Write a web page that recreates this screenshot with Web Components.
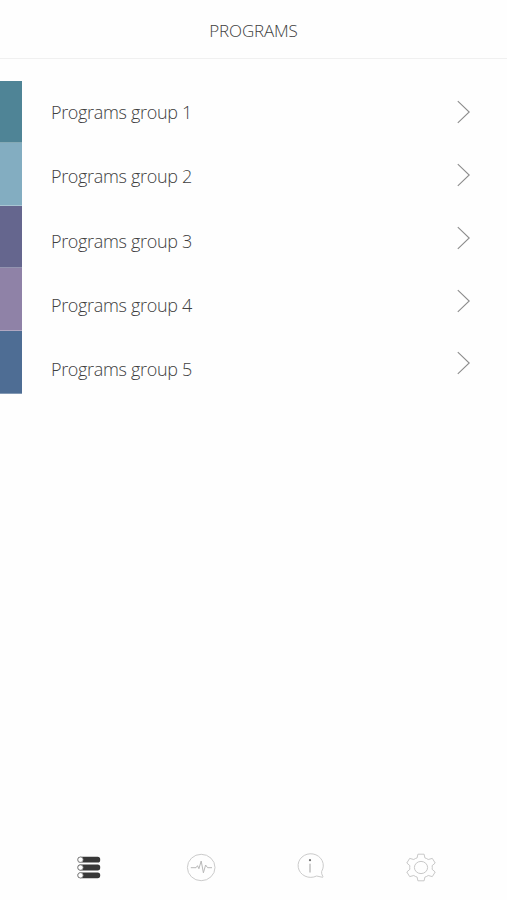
<!DOCTYPE html>
<html lang="en">
<head>
<meta charset="utf-8">
<meta name="viewport" content="width=device-width, initial-scale=1">
<title>Programs</title>
<style>
    body {
        margin: 0;
        background: #fefefe;
        color: #404040;
        font-family: "Open Sans", "Noto Sans", sans-serif;
        font-weight: 300;
    }
</style>
</head>
<body>
<programs-screen>
    <screen-header slot="header">PROGRAMS</screen-header>
    <program-list>
        <program-stripe slot="stripes" color="#4f8496" size="62"></program-stripe>
        <program-stripe slot="stripes" color="#83adc1" size="63"></program-stripe>
        <program-stripe slot="stripes" color="#65668e" size="62"></program-stripe>
        <program-stripe slot="stripes" color="#8f82a7" size="63"></program-stripe>
        <program-stripe slot="stripes" color="#4e6d94" size="63"></program-stripe>
        <program-label>Programs group 1</program-label>
        <program-label>Programs group 2</program-label>
        <program-label>Programs group 3</program-label>
        <program-label>Programs group 4</program-label>
        <program-label>Programs group 5</program-label>
        <chevron-icon slot="arrows"></chevron-icon>
        <chevron-icon slot="arrows"></chevron-icon>
        <chevron-icon slot="arrows"></chevron-icon>
        <chevron-icon slot="arrows"></chevron-icon>
        <chevron-icon slot="arrows"></chevron-icon>
    </program-list>
    <tab-bar slot="footer">
        <tab-icon name="list"></tab-icon>
        <tab-icon name="pulse"></tab-icon>
        <tab-icon name="info"></tab-icon>
        <tab-icon name="gear"></tab-icon>
    </tab-bar>
</programs-screen>

<script>
class ProgramsScreen extends HTMLElement {
    constructor() {
        super();
        this.attachShadow({ mode: "open" });
        this.shadowRoot.innerHTML = `
            <style>
                :host {
                    display: flex;
                    flex-direction: column;
                    height: 100vh;
                    overflow: hidden;
                }
                main {
                    flex: 1;
                    padding-top: 22px;
                }
            </style>
            <slot name="header"></slot>
            <main><slot></slot></main>
            <slot name="footer"></slot>
        `;
    }
}

class ScreenHeader extends HTMLElement {
    constructor() {
        super();
        this.attachShadow({ mode: "open" });
        this.shadowRoot.innerHTML = `
            <style>
                :host {
                    display: block;
                    box-sizing: border-box;
                    height: 59px;
                    padding-top: 19px;
                    border-bottom: 1px solid #f0f0f0;
                    text-align: center;
                    font-size: 17px;
                    line-height: 24px;
                    letter-spacing: -0.15px;
                }
            </style>
            <slot></slot>
        `;
    }
}

class ProgramList extends HTMLElement {
    constructor() {
        super();
        this.attachShadow({ mode: "open" });
        this.shadowRoot.innerHTML = `
            <style>
                :host {
                    display: grid;
                    grid-template-columns: 22px 1fr 14px;
                    padding-right: 36px;
                    align-items: start;
                }
                .column {
                    display: flex;
                    flex-direction: column;
                }
                .labels {
                    padding-left: 29px;
                }
            </style>
            <div class="column"><slot name="stripes"></slot></div>
            <div class="column labels"><slot></slot></div>
            <div class="column"><slot name="arrows"></slot></div>
        `;
    }
}

class ProgramStripe extends HTMLElement {
    constructor() {
        super();
        this.attachShadow({ mode: "open" });
        this.shadowRoot.innerHTML = `
            <style>
                :host {
                    display: block;
                    box-sizing: border-box;
                    width: 22px;
                    height: ${this.getAttribute("size")}px;
                    background: ${this.getAttribute("color")};
                    border-bottom: 1px solid rgba(255, 255, 255, 0.3);
                }
            </style>
        `;
    }
}

class ProgramLabel extends HTMLElement {
    constructor() {
        super();
        this.attachShadow({ mode: "open" });
        this.shadowRoot.innerHTML = `
            <style>
                :host {
                    display: block;
                    height: 64.25px;
                    font-size: 18px;
                    line-height: 63px;
                    letter-spacing: -0.33px;
                    white-space: nowrap;
                }
            </style>
            <slot></slot>
        `;
    }
}

class ChevronIcon extends HTMLElement {
    constructor() {
        super();
        this.attachShadow({ mode: "open" });
        this.shadowRoot.innerHTML = `
            <style>
                :host {
                    display: flex;
                    align-items: center;
                    height: 62.75px;
                }
            </style>
            <svg width="14" height="24" viewBox="0 0 14 24" fill="none" stroke="#8c8c8c" stroke-width="1.1">
                <path d="M.8 1.2 12.2 12 .8 22.8"/>
            </svg>
        `;
    }
}

class TabBar extends HTMLElement {
    constructor() {
        super();
        this.attachShadow({ mode: "open" });
        this.shadowRoot.innerHTML = `
            <style>
                :host {
                    display: grid;
                    grid-template-columns: 112px 109px 111px 32px;
                    align-items: center;
                    height: 66px;
                    padding-left: 73px;
                }
            </style>
            <slot></slot>
        `;
    }
}

const tabIcons = {
    list: `
        <g fill="#383838">
            <rect x="4.6" y="5.8" width="22.6" height="5.8" rx="2.6"/>
            <rect x="4.6" y="13.6" width="22.6" height="5.8" rx="2.6"/>
            <rect x="4.6" y="21.4" width="22.6" height="5.8" rx="2.6"/>
        </g>
        <g fill="#fff" stroke="#888" stroke-width=".8">
            <circle cx="7.5" cy="8.7" r="2.6"/>
            <circle cx="7.5" cy="16.5" r="2.6"/>
            <circle cx="7.5" cy="24.3" r="2.6"/>
        </g>`,
    pulse: `
        <g fill="none" stroke="#cbcbcb">
            <ellipse cx="16.2" cy="16.5" rx="13.8" ry="13.2"/>
            <path d="M5.8 16.7h5.2l1.5-2 1.4 3 2.3-7.7 2.2 11.8 2.2-7.8 2 2.7h4.4" stroke="#b8b8b8"/>
        </g>`,
    info: `
        <path d="M27.6 20.5A12.6 11.8 0 1 0 22.6 25L28.6 26.3Q29.4 26.2 28.8 25.4Q27.2 22.6 27.6 20.5Z" fill="none" stroke="#cbcbcb"/>
        <path d="M16 12.7v8.8" stroke="#a0a0a0"/>
        <circle cx="16" cy="9.2" r="1.1" fill="#707070"/>`,
    gear: `
        <g fill="none" stroke="#c8c8c8" stroke-linejoin="round">
            <path d="M12.9 3.2h6.2l.8 3.7q2 .6 3.3 1.6l4.1-1.1 2.9 4.6-3.1 2.7q.4 1.8 0 3.6l3.1 2.7-2.9 4.6-4.1-1.1q-1.3 1-3.3 1.6l-.8 3.7h-6.2l-.8-3.7q-2-.6-3.3-1.6l-4.1 1.1-2.9-4.6 3.1-2.7q-.4-1.8 0-3.6l-3.1-2.7 2.9-4.6 4.1 1.1q1.3-1 3.3-1.6z"/>
            <ellipse cx="16" cy="16.5" rx="6.6" ry="6.1"/>
        </g>`
};

class TabIcon extends HTMLElement {
    constructor() {
        super();
        this.attachShadow({ mode: "open" });
        this.shadowRoot.innerHTML = `
            <style>
                :host {
                    display: block;
                    width: 32px;
                    height: 32px;
                }
                svg {
                    display: block;
                }
            </style>
            <svg width="32" height="32" viewBox="0 0 32 32">${tabIcons[this.getAttribute("name")]}</svg>
        `;
    }
}

customElements.define("programs-screen", ProgramsScreen);
customElements.define("screen-header", ScreenHeader);
customElements.define("program-list", ProgramList);
customElements.define("program-stripe", ProgramStripe);
customElements.define("program-label", ProgramLabel);
customElements.define("chevron-icon", ChevronIcon);
customElements.define("tab-bar", TabBar);
customElements.define("tab-icon", TabIcon);
</script>
</body>
</html>
